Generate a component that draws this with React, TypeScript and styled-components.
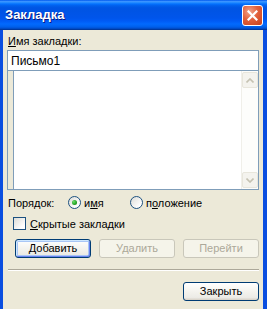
import styled, { createGlobalStyle } from "styled-components";

const Global = createGlobalStyle`
  html, body {
    margin: 0;
    padding: 0;
    background: #ffffff;
  }
`;

const Window = styled.div`
  width: 267px;
  height: 309px;
  overflow: hidden;
  display: flex;
  flex-direction: column;
  font-family: "Liberation Sans", Arial, sans-serif;
  font-size: 11px;
  color: #000;
`;

const TitleBar = styled.div`
  height: 30px;
  flex: none;
  display: flex;
  align-items: center;
  justify-content: space-between;
  padding: 0 4px 0 5px;
  box-sizing: border-box;
  background: linear-gradient(
    to bottom,
    #0058ee 0%,
    #3a93ff 5%,
    #288eff 8%,
    #127dff 11%,
    #036ffc 14%,
    #0262ee 18%,
    #0057e5 24%,
    #0054e3 30%,
    #0055eb 60%,
    #005bf5 70%,
    #026afe 80%,
    #0062ef 88%,
    #0052d6 94%,
    #0040ab 97%,
    #003092 100%
  );
`;

const Title = styled.span`
  font-family: "Liberation Sans", Arial, sans-serif;
  font-weight: bold;
  font-size: 13px;
  color: #fff;
  text-shadow: 1px 1px 0 #0a1883;
  margin-top: -1px;
`;

const CloseButton = styled.div`
  width: 21px;
  height: 21px;
  box-sizing: border-box;
  border: 1px solid #fff;
  border-radius: 3px;
  background: radial-gradient(circle at 35% 30%, #f0a48c 0%, #e2613c 45%, #c8401b 100%);
  display: flex;
  align-items: center;
  justify-content: center;
`;

const Body = styled.div`
  flex: 1;
  background: #ece9d8;
  border-left: 3px solid #0a4ee0;
  border-right: 4px solid #0a4ee0;
  display: flex;
  flex-direction: column;
`;

const FieldLabel = styled.div`
  line-height: 13px;
  padding: 5px 0 0 5px;
`;

const Key = styled.span`
  text-decoration: underline;
`;

const Combo = styled.div`
  margin: 2px 4px 0 4px;
  border: 1px solid #7f9db9;
  display: flex;
  flex-direction: column;
`;

const Edit = styled.div`
  height: 20px;
  background: #fff;
  border-bottom: 1px solid #7f9db9;
  display: flex;
  align-items: center;
  padding-left: 3px;
  box-sizing: border-box;
  font-size: 12px;
`;

const ListRow = styled.div`
  height: 118px;
  display: flex;
  padding-left: 5px;
`;

const ListBox = styled.div`
  flex: 1;
  background: #fff;
  border-left: 1px solid #7f9db9;
  display: flex;
  justify-content: flex-end;
`;

const ScrollBar = styled.div`
  width: 17px;
  background: #fdfdfb;
  border-left: 1px solid #f0efe9;
  display: flex;
  flex-direction: column;
  justify-content: space-between;
  padding: 1px 0;
  box-sizing: border-box;
`;

const ArrowButton = styled.div`
  width: 16px;
  height: 16px;
  box-sizing: border-box;
  border: 1px solid #e8e6dc;
  border-radius: 2px;
  background: #f4f3ee;
  display: flex;
  align-items: center;
  justify-content: center;
`;

const OrderRow = styled.div`
  margin-top: 6px;
  padding-left: 5px;
  height: 13px;
  display: flex;
  align-items: center;
`;

const OrderLabel = styled.span`
  width: 60px;
`;

const RadioOption = styled.label<{ $width: number }>`
  width: ${(p) => p.$width}px;
  display: flex;
  align-items: center;
  gap: 3px;
`;

const RadioCircle = styled.span<{ $checked?: boolean }>`
  width: 13px;
  height: 13px;
  box-sizing: border-box;
  border-radius: 50%;
  border: 1px solid #1c5180;
  background: linear-gradient(135deg, #dcdcd7 0%, #ffffff 80%);
  display: flex;
  align-items: center;
  justify-content: center;
  &::after {
    content: "";
    display: ${(p) => (p.$checked ? "block" : "none")};
    width: 5px;
    height: 5px;
    border-radius: 50%;
    background: radial-gradient(circle at 35% 35%, #6be06b 0%, #21a121 60%, #137713 100%);
  }
`;

const CheckRow = styled.label`
  margin-top: 8px;
  padding-left: 10px;
  height: 13px;
  display: flex;
  align-items: center;
  gap: 4px;
`;

const CheckBox = styled.span`
  width: 13px;
  height: 13px;
  box-sizing: border-box;
  border: 1px solid #1c5180;
  background: linear-gradient(135deg, #dcdcd7 0%, #ffffff 80%);
`;

const ButtonRow = styled.div<{ $top: number; $end?: boolean }>`
  margin-top: ${(p) => p.$top}px;
  padding: 0 4px 0 12px;
  display: flex;
  gap: 8px;
  justify-content: ${(p) => (p.$end ? "flex-end" : "flex-start")};
`;

const Button = styled.div<{ $default?: boolean; $disabled?: boolean }>`
  width: 76px;
  height: 19px;
  box-sizing: border-box;
  border-radius: 3px;
  border: 1px solid ${(p) => (p.$disabled ? "#c9c7ba" : "#003c74")};
  background: ${(p) =>
    p.$disabled
      ? "#f5f4ea"
      : "linear-gradient(to bottom, #ffffff 0%, #f4f3ee 50%, #ecebe6 85%, #d6d0c5 100%)"};
  color: ${(p) => (p.$disabled ? "#aca899" : "#000")};
  box-shadow: ${(p) =>
    p.$default ? "inset 1px 1px 0 #cee7ff, inset -1px -1px 0 #6982ee, inset 0 0 0 2px #a9c6f5" : "none"};
  display: flex;
  align-items: center;
  justify-content: center;
  line-height: 13px;
`;

const Separator = styled.div`
  margin: 11px 4px 0 5px;
  height: 1px;
  background: #aca899;
  border-bottom: 1px solid #ffffff;
`;

export default function App() {
  return (
    <>
      <Global />
      <Window>
        <TitleBar>
          <Title>Закладка</Title>
          <CloseButton>
            <svg width="11" height="11" viewBox="0 0 11 11">
              <path d="M1.5 1.5 L9.5 9.5 M9.5 1.5 L1.5 9.5" stroke="#fff" strokeWidth="2.2" strokeLinecap="square" />
            </svg>
          </CloseButton>
        </TitleBar>
        <Body>
          <FieldLabel>
            <Key>И</Key>мя закладки:
          </FieldLabel>
          <Combo>
            <Edit>Письмо1</Edit>
            <ListRow>
              <ListBox>
                <ScrollBar>
                  <ArrowButton>
                    <svg width="8" height="5" viewBox="0 0 8 5">
                      <path d="M0.5 4.5 L4 1 L7.5 4.5" fill="none" stroke="#c5c2b2" strokeWidth="1.6" />
                    </svg>
                  </ArrowButton>
                  <ArrowButton>
                    <svg width="8" height="5" viewBox="0 0 8 5">
                      <path d="M0.5 0.5 L4 4 L7.5 0.5" fill="none" stroke="#c5c2b2" strokeWidth="1.6" />
                    </svg>
                  </ArrowButton>
                </ScrollBar>
              </ListBox>
            </ListRow>
          </Combo>
          <OrderRow>
            <OrderLabel>Порядок:</OrderLabel>
            <RadioOption $width={62}>
              <RadioCircle $checked />
              <span>
                и<Key>м</Key>я
              </span>
            </RadioOption>
            <RadioOption $width={90}>
              <RadioCircle />
              <span>
                п<Key>о</Key>ложение
              </span>
            </RadioOption>
          </OrderRow>
          <CheckRow>
            <CheckBox />
            <span>
              <Key>С</Key>крытые закладки
            </span>
          </CheckRow>
          <ButtonRow $top={9}>
            <Button $default>
              <span>
                <Key>Д</Key>обавить
              </span>
            </Button>
            <Button $disabled>Удалить</Button>
            <Button $disabled>Перейти</Button>
          </ButtonRow>
          <Separator />
          <ButtonRow $top={11} $end>
            <Button>Закрыть</Button>
          </ButtonRow>
        </Body>
      </Window>
    </>
  );
}
